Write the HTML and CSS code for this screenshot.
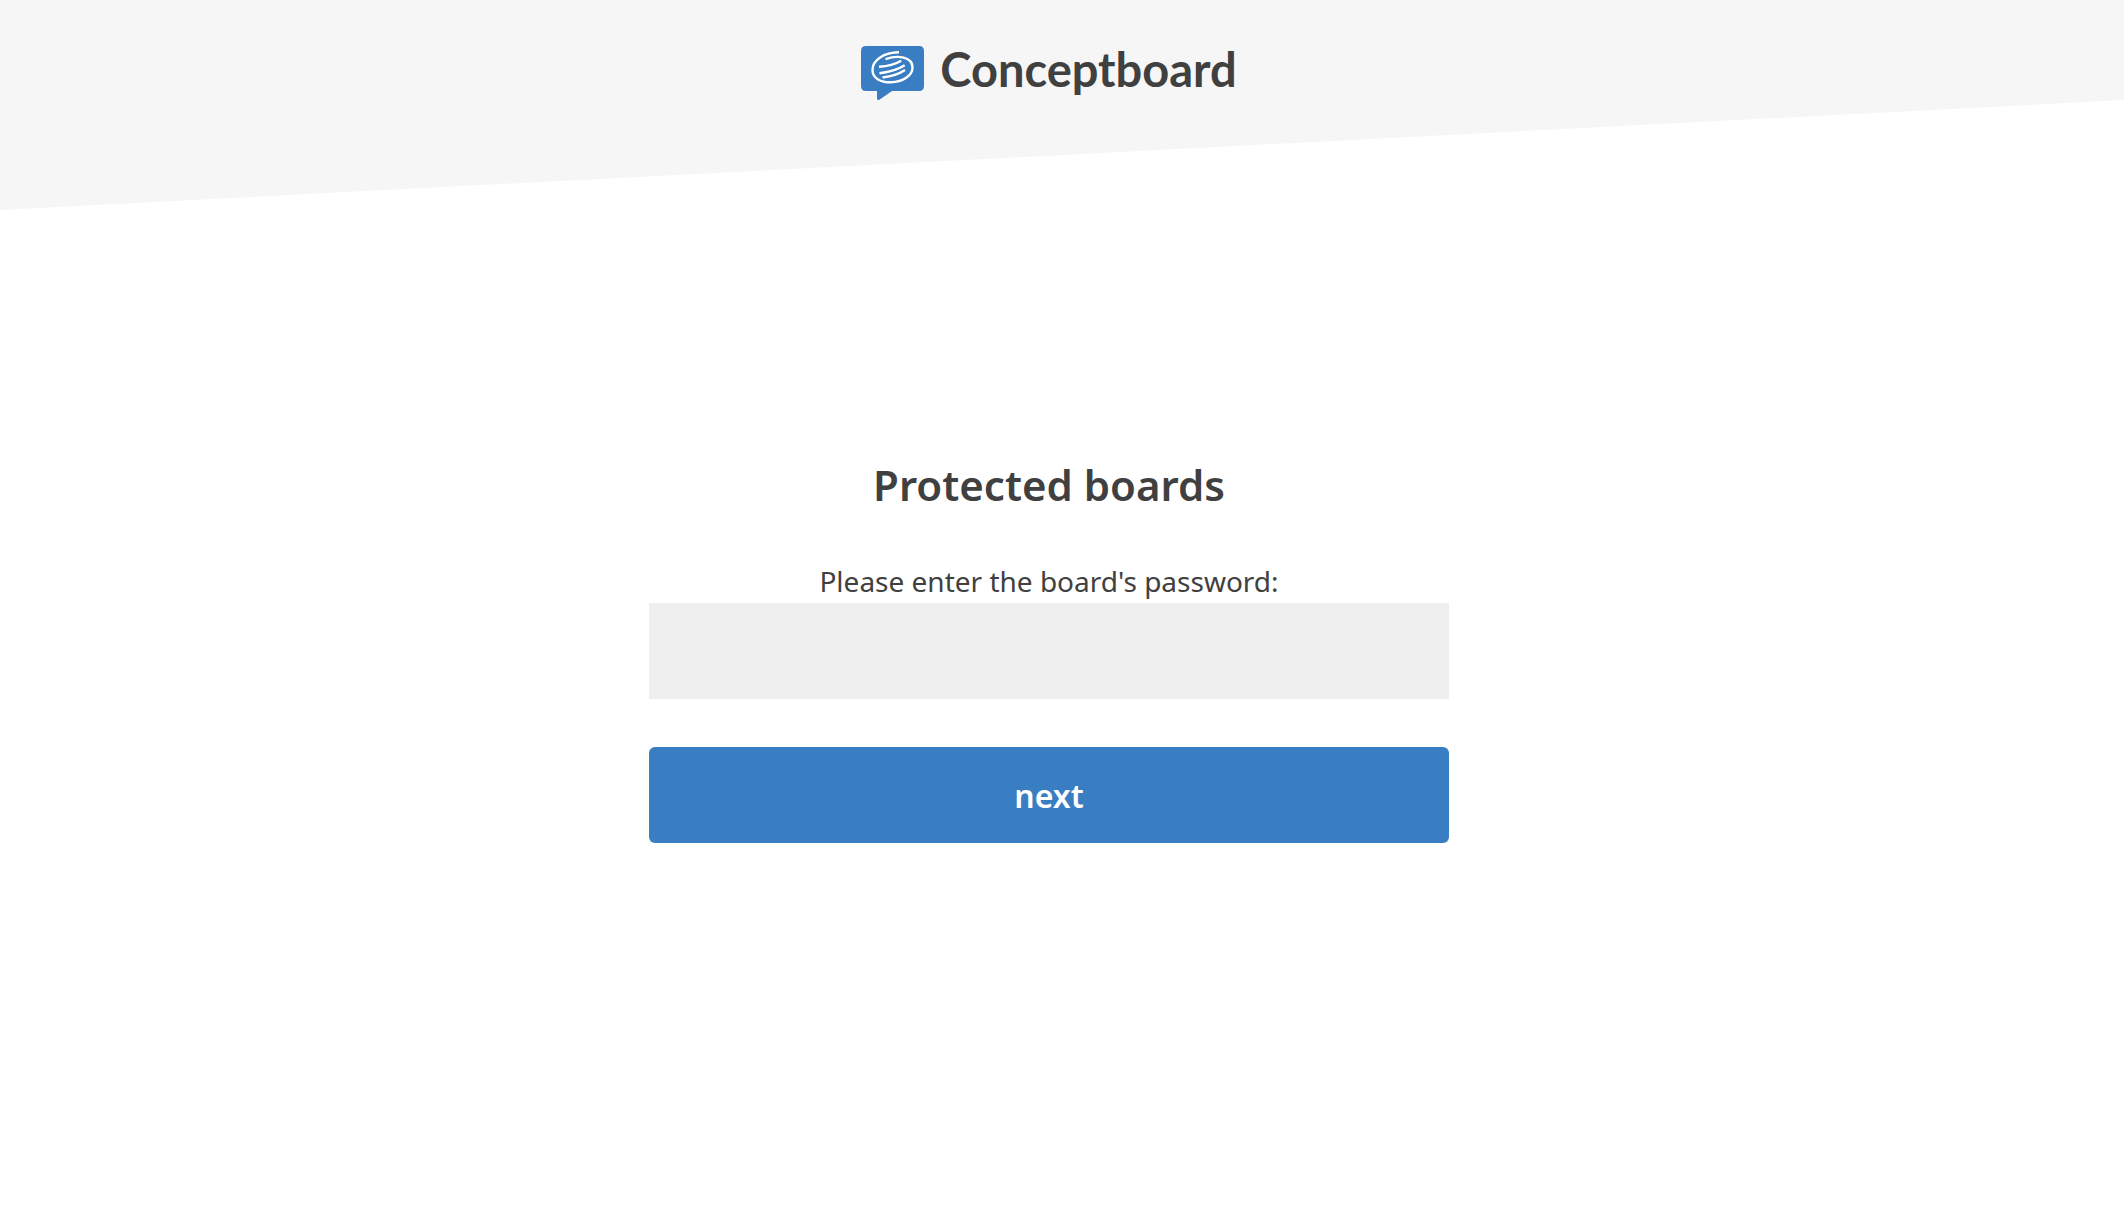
FILE: index.html
```html
<!DOCTYPE html>
<html lang="en">
<head>
  <meta charset="UTF-8" />
  <title>Protected boards - Conceptboard</title>
  <meta name="viewport" content="width=device-width, initial-scale=1.0"/>
  <link rel="stylesheet" href="styles.css">
</head>
<body>

<header class="header">
  <a class="logo" href="#">
    <svg class="logo-icon" viewBox="0 0 63 54" aria-hidden="true">
      <path fill="#397dc2" d="M5 0H58Q63 0 63 5V40Q63 45 58 45H31L18 54Q16 54 16 53V45H5Q0 45 0 40V5Q0 0 5 0Z"/>
      <g fill="none" stroke="#fff" stroke-width="2.4">
        <path d="M38 6.300C23 6.500 11.500 14 11.500 24C11.500 32.500 20 36.500 30 36.300C42 36 51.500 29.500 51.500 21.500C51.500 11 37 8.500 24.500 13.200"/>
        <path d="M18 20.800C27 20.300 34 18.500 40.200 14.800"/>
        <path d="M18.500 27.300C28 26 37 23.500 43.700 19.200"/>
        <path d="M21.500 31.500C30 30.500 38 28 44 24"/>
      </g>
    </svg>
    <span class="logo-text">Conceptboard</span>
  </a>
</header>

<main class="content">
  <form class="password-form">
    <h1 class="title">Protected boards</h1>
    <label class="label" for="password">Please enter the board's password:</label>
    <input class="password" type="password" id="password" name="password">
    <button class="next" type="submit">next</button>
  </form>
</main>

</body>
</html>
```
FILE: styles.css
```css
* {
  box-sizing: border-box;
}

body {
  margin: 0;
  background-color: #fff;
  color: #404040;
  font-family: 'Noto Sans', sans-serif;
}

.header {
  display: flex;
  justify-content: center;
  align-items: flex-start;
  height: 210px;
  padding: 46px 26px 0 0;
  background-color: #f6f6f6;
  clip-path: polygon(0 0, 100% 0, 100% 100px, 0 100%);
}

.logo {
  display: flex;
  align-items: flex-start;
  gap: 16px;
  color: #404040;
  text-decoration: none;
}

.logo-icon {
  width: 63px;
  height: 54px;
}

.logo-text {
  font-family: Lato, sans-serif;
  font-size: 47px;
  font-weight: 700;
  line-height: 46px;
}

.content {
  display: flex;
  justify-content: center;
  padding: 245px 26px 0 0;
}

.password-form {
  display: flex;
  flex-direction: column;
  width: 100%;
  max-width: 800px;
}

.title {
  margin: 0 0 46px;
  font-size: 42px;
  font-weight: 600;
  line-height: 60px;
  text-align: center;
}

.label {
  margin-bottom: 2px;
  font-size: 28px;
  line-height: 40px;
  text-align: center;
}

.password {
  height: 96px;
  padding: 0 24px;
  border: none;
  border-radius: 0;
  background-color: #efefef;
  font-size: 28px;
}

.next {
  height: 96px;
  margin-top: 48px;
  border: none;
  border-radius: 6px;
  background-color: #397dc2;
  color: #fff;
  font-family: inherit;
  font-size: 32px;
  font-weight: 600;
  cursor: pointer;
}
```
